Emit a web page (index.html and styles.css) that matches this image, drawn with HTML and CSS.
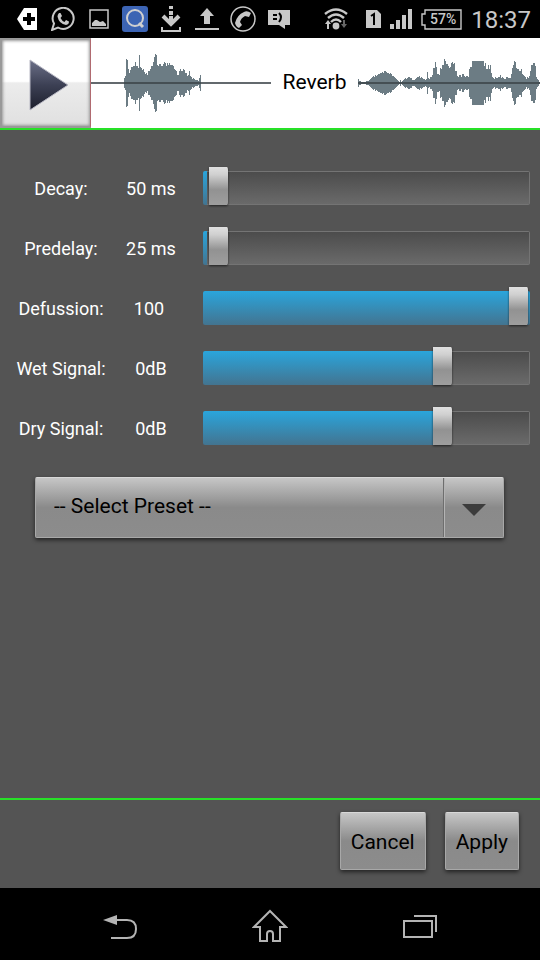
FILE: index.html
```html
<!DOCTYPE html>
<html lang="en">
<head>
    <meta charset="UTF-8">
    <meta name="viewport" content="width=device-width,initial-scale=1">
    <title>Reverb</title>
    <link rel="stylesheet" href="styles.css">
</head>
<body>

    <div class="statusBar">
        <div class="notifications">
            <span class="slot">
                <svg width="20" height="22" viewBox="0 0 20 22"><path d="M7 0h13v22H7L0 11z" fill="#fff"/><path d="M12 5v12M6 11h12" stroke="#000" stroke-width="4"/></svg>
            </span>
            <span class="slot">
                <svg width="24" height="24" viewBox="0 0 24 24"><path d="M1 23l2-6.500a10.500 10.500 0 1 1 4 4z" fill="none" stroke="#c8c8c8" stroke-width="2"/><path d="M8 6l1.500 0 1.500 3-1.500 2q1.500 3 4 4l1.500-2 3 1.500q0 3-3 3.500Q8 17 6.500 9.500q0-2 1.500-3.500z" fill="#c8c8c8"/></svg>
            </span>
            <span class="slot">
                <svg width="20" height="20" viewBox="0 0 20 20"><path d="M1 1h18v18H1z" fill="none" stroke="#c8c8c8" stroke-width="1.5"/><path d="M3 17v-3l3-3 2 0 3 2 3-1 3 3v2z" fill="#c8c8c8"/></svg>
            </span>
            <span class="slot">
                <svg width="26" height="26" viewBox="0 0 26 26"><rect width="26" height="26" rx="3" fill="#3c64b4"/><circle cx="13" cy="12" r="8" fill="none" stroke="#d0d0d0" stroke-width="2"/><path d="M17 17l4 4" stroke="#d0d0d0" stroke-width="3"/></svg>
            </span>
            <span class="slot">
                <svg width="20" height="26" viewBox="0 0 20 26"><path d="M10 0v3M10 5v4M10 10v9M2 10l8 8 8-8" fill="none" stroke="#c8c8c8" stroke-width="4"/><path d="M1 21v4h18v-4" fill="none" stroke="#c8c8c8" stroke-width="2"/></svg>
            </span>
            <span class="slot">
                <svg width="24" height="22" viewBox="0 0 24 22"><path d="M12 0l7 8h-4v8H9V8H5zM0 20h24v2H0z" fill="#c8c8c8"/></svg>
            </span>
            <span class="slot">
                <svg width="26" height="26" viewBox="0 0 26 26"><circle cx="13" cy="13" r="12" fill="none" stroke="#c8c8c8" stroke-width="1.5"/><path d="M14 6q3-2 7 1l-2 4-4-1q-4 2-5 6l2 3-3 3q-3-1-4-5Q7 9 14 6z" fill="#c8c8c8"/></svg>
            </span>
            <span class="slot">
                <svg width="22" height="20" viewBox="0 0 22 20"><path d="M0 1h22v15h-5v4l-6-4H0z" fill="#c8c8c8"/><path d="M5 6h4M5 10h4M11 4q4 4 0 9" fill="none" stroke="#000" stroke-width="2"/></svg>
            </span>
        </div>
        <div class="system">
            <svg class="wifi" width="24" height="22" viewBox="0 0 24 22"><path d="M1 6q11-9 22 0M4 10q8-7 16 0M7 14q5-5 10 0" fill="none" stroke="#c8c8c8" stroke-width="2.4"/><circle cx="12" cy="18" r="3.4" fill="#c8c8c8"/><path d="M4 12l3 4H5v5H3v-5H1z" fill="#c8c8c8"/><path d="M20 20l3-4h-2v-4h-2v4h-2z" fill="#666"/></svg>
            <svg width="15" height="18" viewBox="0 0 15 18"><path d="M0 0h11l4 4v14H0z" fill="#c8c8c8"/><path d="M5 6l3-2v11" fill="none" stroke="#000" stroke-width="2"/></svg>
            <svg width="22" height="20" viewBox="0 0 22 20"><path d="M0 15h4v5H0zM6 11h4v9H6zM12 6h4v14h-4zM18 0h4v20h-4z" fill="#c8c8c8"/></svg>
            <span class="battery">
                <svg width="41" height="21" viewBox="0 0 41 21"><path d="M4 1h36v19H4v-4H1V5h3z" fill="none" stroke="#c8c8c8" stroke-width="1.4"/></svg>
                <span class="batteryLevel">57%</span>
            </span>
            <span class="clock">18:37</span>
        </div>
    </div>

    <header class="track">
        <button class="play" type="button" aria-label="Play">
            <svg width="40" height="52" viewBox="0 0 40 52">
                <defs><linearGradient id="playFill" x1="0" y1="0" x2="0" y2="1"><stop offset="0" stop-color="#6c7088"/><stop offset=".5" stop-color="#3c4054"/><stop offset="1" stop-color="#1c1e2c"/></linearGradient></defs>
                <path d="M1 1l38 25L1 51z" fill="url(#playFill)" stroke="#b8b8c4" stroke-width="1"/>
            </svg>
        </button>
        <svg class="wave waveIn" id="waveIn" viewBox="0 0 180 90" preserveAspectRatio="none"></svg>
        <h1 class="title">Reverb</h1>
        <svg class="wave waveOut" id="waveOut" viewBox="0 0 182 90" preserveAspectRatio="none"></svg>
    </header>

    <main class="settings">
        <div class="row">
            <label class="name" for="decay">Decay:</label>
            <output class="value" for="decay">50 ms</output>
            <input class="slider" id="decay" type="range" min="0" max="5000" value="50" style="--fill: 1%">
        </div>
        <div class="row">
            <label class="name" for="predelay">Predelay:</label>
            <output class="value" for="predelay">25 ms</output>
            <input class="slider" id="predelay" type="range" min="0" max="2500" value="25" style="--fill: 1%">
        </div>
        <div class="row">
            <label class="name" for="defussion">Defussion:</label>
            <output class="value valueShort" for="defussion">100</output>
            <input class="slider" id="defussion" type="range" min="0" max="100" value="100" style="--fill: 100%">
        </div>
        <div class="row">
            <label class="name" for="wet">Wet Signal:</label>
            <output class="value" for="wet">0dB</output>
            <input class="slider" id="wet" type="range" min="-60" max="20" value="0" style="--fill: 75%">
        </div>
        <div class="row">
            <label class="name" for="dry">Dry Signal:</label>
            <output class="value" for="dry">0dB</output>
            <input class="slider" id="dry" type="range" min="-60" max="20" value="0" style="--fill: 75%">
        </div>

        <div class="preset">
            <select class="presetSelect" aria-label="Preset">
                <option>-- Select Preset --</option>
            </select>
            <span class="presetArrow">
                <svg width="24" height="12" viewBox="0 0 24 12"><path d="M0 0h24L12 12z" fill="#3c3c3c"/></svg>
            </span>
        </div>
    </main>

    <footer class="actions">
        <button class="btn" type="button">Cancel</button>
        <button class="btn" type="button">Apply</button>
    </footer>

    <nav class="navBar">
        <button class="navBtn" type="button" aria-label="Back">
            <svg width="36" height="28" viewBox="0 0 36 28"><path d="M1 8l14-5v10z" fill="#b4b4b4"/><path d="M14 8h11q9 0 9 9t-9 9H9" fill="none" stroke="#b4b4b4" stroke-width="2"/></svg>
        </button>
        <button class="navBtn" type="button" aria-label="Home">
            <svg width="36" height="34" viewBox="0 0 36 34"><path d="M18 2l16 16h-6v14h-7v-7q0-3-3-3t-3 3v7H8V18H2z" fill="none" stroke="#b4b4b4" stroke-width="2"/></svg>
        </button>
        <button class="navBtn" type="button" aria-label="Recent apps">
            <svg width="36" height="26" viewBox="0 0 36 26"><path d="M2 8h28v16H2zM12 3h22v16" fill="none" stroke="#b4b4b4" stroke-width="2"/></svg>
        </button>
    </nav>

    <script src="waveform.js"></script>
</body>
</html>
```
FILE: styles.css
```css
html, body {
    margin: 0;
    padding: 0;
}

body {
    display: flex;
    flex-direction: column;
    min-height: 100vh;
    background-color: #545454;
    color: white;
    font-family: Roboto, "Liberation Sans", sans-serif;
    font-size: 18px;
}

svg {
    display: block;
}

button, select {
    font-family: inherit;
    color: black;
}

/* status bar */

.statusBar {
    display: flex;
    justify-content: space-between;
    align-items: center;
    height: 38px;
    padding: 0 9px;
    background-color: black;
    color: #c8c8c8;
}

.notifications {
    display: flex;
}

.slot {
    display: flex;
    justify-content: center;
    align-items: center;
    width: 36px;
}

.system {
    display: flex;
    align-items: center;
    gap: 9px;
}

.wifi {
    margin-right: 9px;
}

.battery {
    position: relative;
}

.batteryLevel {
    position: absolute;
    top: 0;
    left: 3px;
    right: 0;
    text-align: center;
    font-size: 14px;
    line-height: 21px;
    font-weight: 500;
}

.clock {
    font-size: 24px;
    line-height: 38px;
    padding-top: 2px;
}

/* waveform header */

.track {
    display: flex;
    height: 90px;
    background-color: white;
    border-bottom: 2px solid #28e028;
}

.play {
    display: flex;
    justify-content: center;
    align-items: center;
    box-sizing: border-box;
    width: 91px;
    padding: 4px 0 0 5px;
    border: 2px solid #999;
    border-right: 1px solid #b06a70;
    background: linear-gradient(#fff 48%, #ececec 50%, #e0e0e0);
    box-shadow: inset 0 0 3px 1px #999;
}

.wave {
    height: 90px;
}

.waveIn {
    width: 180px;
}

.waveOut {
    flex: 1;
    min-width: 0;
}

.title {
    width: 87px;
    margin: 0;
    color: black;
    font-size: 21px;
    font-weight: 400;
    line-height: 88px;
    text-align: center;
}

/* sliders */

.settings {
    flex: 1;
    padding: 28px 10px 0;
}

.row {
    display: grid;
    grid-template-columns: 102px 78px 1fr;
    align-items: center;
    height: 60px;
}

.name, .value {
    padding-top: 2px;
    text-align: center;
    line-height: 24px;
}

.valueShort {
    padding-right: 4px;
}

.slider {
    -webkit-appearance: none;
    appearance: none;
    min-width: 0;
    height: 40px;
    margin: 0 0 0 13px;
    background: none;
}

.slider::-webkit-slider-runnable-track {
    box-sizing: border-box;
    height: 34px;
    border-radius: 2px;
    background:
        linear-gradient(#2aa5dc, #437490) no-repeat 0 0 / calc(var(--fill) + 1px) 100%,
        linear-gradient(#4c4c4c, #6a6a6a) no-repeat 50% 50% / calc(100% - 2px) calc(100% - 2px),
        #747474;
}

.slider::-webkit-slider-thumb {
    -webkit-appearance: none;
    appearance: none;
    box-sizing: border-box;
    width: 24px;
    height: 38px;
    margin-top: -4px;
    border: solid transparent;
    border-width: 0 2px 0 3px;
    border-radius: 3px;
    background: linear-gradient(#e0e0e0, #d0d0d0 20%, #929292 60%, #9e9e9e) padding-box;
    filter: drop-shadow(0 1px 1px rgba(0, 0, 0, 0.6));
}

/* preset */

.preset {
    position: relative;
    margin: 19px 26px 0 25px;
}

.presetSelect, .btn {
    border: 1px solid #a8a8a8;
    border-top-color: #d8d8d8;
    border-radius: 2px;
    background: linear-gradient(#c6c6c6, #8a8a8a 50%, #8c8c8c);
    box-shadow: 0 2px 4px rgba(0, 0, 0, 0.6);
    font-size: 21px;
}

.presetSelect {
    -webkit-appearance: none;
    appearance: none;
    display: block;
    width: 100%;
    height: 61px;
    padding: 0 70px 3px 18px;
}

.presetArrow {
    position: absolute;
    top: 1px;
    right: 1px;
    bottom: 1px;
    display: flex;
    justify-content: center;
    align-items: center;
    width: 60px;
    padding-top: 4px;
    border-left: 1px solid #6e6e6e;
    box-shadow: inset 1px 0 #b4b4b4;
    box-sizing: border-box;
    pointer-events: none;
}

/* bottom buttons */

.actions {
    display: flex;
    justify-content: flex-end;
    gap: 19px;
    padding: 12px 21px 18px;
    border-top: 2px solid #28e028;
}

.btn {
    height: 58px;
    padding: 2px 10px 0;
}

/* navigation bar */

.navBar {
    display: flex;
    height: 72px;
    padding: 0 45px;
    background-color: black;
}

.navBtn {
    display: flex;
    flex: 1;
    justify-content: center;
    align-items: center;
    padding: 4px 0 0;
    border: 0;
    background: none;
}
```
FILE: waveform.js
```js
var waveIn = [
    5, 7, 24, 23, 14, 10, 13, 16, 16, 17, 17, 21, 17, 17, 15, 28, 16, 15, 13, 14,
    11, 9, 10, 8, 12, 12, 14, 17, 17, 21, 26, 29, 28, 18, 17, 19, 19, 17, 17, 19,
    21, 20, 17, 20, 18, 20, 18, 18, 18, 17, 14, 13, 12, 8, 8, 12, 14, 12, 12, 14,
    13, 10, 10, 7, 8, 12, 7, 6, 4, 5, 4, 3, 3, 3, 2, 5, 8
];

var waveOut = [
    4, 2, 2, 1, 1, 1, 1, 1, 2, 2, 2, 3, 4, 5, 6, 7, 6, 8, 7, 8,
    9, 9, 10, 10, 11, 10, 12, 12, 11, 10, 10, 9, 10, 9, 7, 7, 6, 5, 4, 3,
    2, 1, 3, 1, 2, 3, 4, 5, 4, 5, 6, 6, 5, 5, 3, 3, 3, 4, 5, 6,
    6, 7, 5, 6, 5, 4, 4, 3, 4, 11, 5, 4, 6, 6, 8, 15, 15, 21, 16, 9,
    9, 8, 15, 14, 18, 18, 24, 22, 19, 19, 17, 15, 16, 20, 21, 19, 20, 12, 12, 7,
    6, 8, 8, 6, 9, 9, 7, 6, 7, 7, 6, 14, 16, 16, 22, 22, 22, 22, 22, 22,
    22, 22, 22, 22, 22, 22, 17, 20, 14, 14, 18, 14, 18, 10, 6, 5, 4, 6, 5, 5,
    6, 6, 8, 5, 6, 5, 4, 4, 6, 6, 5, 5, 5, 9, 15, 18, 22, 21, 15, 14,
    14, 12, 12, 14, 9, 8, 7, 6, 4, 6, 5, 7, 12, 18, 18, 20, 20, 17, 6, 4, 3, 1
];

// one bar per sample, mirrored around the zero line
function drawWave ( id, samples, start, width ) {

    var d = '';

    for ( var i = 0; i < samples.length; i++ ) {

        d += 'M' + ( start + i ) + ' ' + ( 45 - samples[i] ) + 'h1v' + ( samples[i] * 2 ) + 'h-1z';

    }

    document.getElementById( id ).innerHTML =
        '<path fill="#6c7c84" shape-rendering="crispEdges" d="' + d + '"/>' +
        '<path fill="#3c4448" d="M0 44h' + width + 'v2H0z" opacity="0.8"/>';

}

drawWave( 'waveIn', waveIn, 33, 180 );
drawWave( 'waveOut', waveOut, 0, 182 );
```
